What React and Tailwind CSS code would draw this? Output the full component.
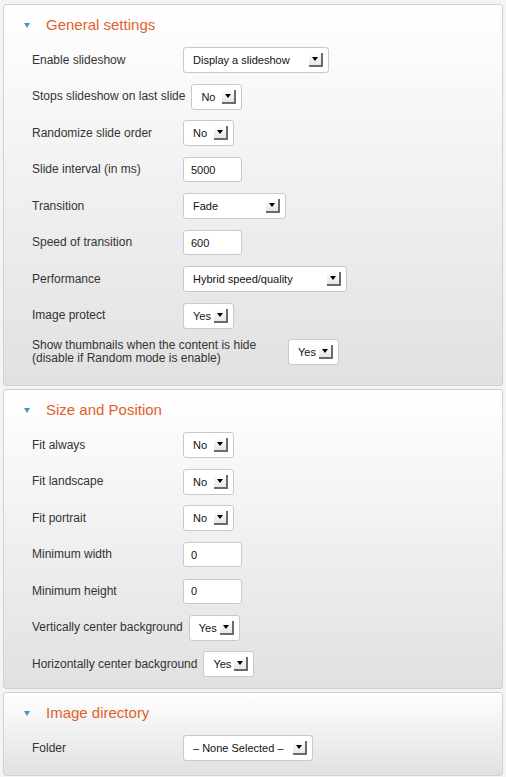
import React from 'react';

const Arrow = () => (
  <span className="flex h-[14px] w-[14px] shrink-0 items-center justify-center border-r-2 border-b-2 border-[#6b6b6b] bg-gradient-to-b from-white to-[#e6e6e6]">
    <span className="h-0 w-0 border-x-[3px] border-t-[4px] border-x-transparent border-t-black" />
  </span>
);

const Select = ({ value, width }) => (
  <div className={`flex h-[26px] shrink-0 items-center justify-between rounded-[3px] border border-[#c9c9c9] bg-white pl-[9px] pr-[5px] text-[11px] text-[#111] ${width}`}>
    <span className="whitespace-nowrap">{value}</span>
    <Arrow />
  </div>
);

const Input = ({ value }) => (
  <div className="flex h-[25px] w-[59px] shrink-0 items-center rounded-[3px] border border-[#c9c9c9] bg-white pl-[7px] text-[11px] text-[#111]">
    {value}
  </div>
);

const Row = ({ label, children, labelClass = 'min-w-[151px]' }) => (
  <div className="flex h-[36.5px] items-center pl-[28px]">
    <div className={`shrink-0 pr-[6px] text-[12px] leading-[13px] text-[#333] ${labelClass}`}>{label}</div>
    {children}
  </div>
);

const Panel = ({ title, pb, children }) => (
  <div className={`rounded-[3px] border border-[#cfcfcf] bg-gradient-to-b from-white to-[#e1e1e1] ${pb}`}>
    <div className="flex h-[37px] items-center pl-[20px] pt-[4px]">
      <span className="h-0 w-0 border-x-[3.5px] border-t-[5px] border-x-transparent border-t-[#3c9cc0]" />
      <span className="ml-[16px] text-[15px] text-[#e0622b]">{title}</span>
    </div>
    {children}
  </div>
);

export default function App() {
  return (
    <div className="min-h-screen bg-[#f4f4f4] px-[3px] pt-[4px] font-['Liberation_Sans',Arial,sans-serif]">
      <div className="flex flex-col gap-[3px]">
        <Panel title="General settings" pb="pb-[14.5px]">
          <Row label="Enable slideshow"><Select value="Display a slideshow" width="w-[146px]" /></Row>
          <Row label="Stops slideshow on last slide"><Select value="No" width="w-[51px]" /></Row>
          <Row label="Randomize slide order"><Select value="No" width="w-[51px]" /></Row>
          <Row label="Slide interval (in ms)"><Input value="5000" /></Row>
          <Row label="Transition"><Select value="Fade" width="w-[103px]" /></Row>
          <Row label="Speed of transition"><Input value="600" /></Row>
          <Row label="Performance"><Select value="Hybrid speed/quality" width="w-[164px]" /></Row>
          <Row label="Image protect"><Select value="Yes" width="w-[51px]" /></Row>
          <Row
            label={<>Show thumbnails when the content is hide<br />(disable if Random mode is enable)</>}
            labelClass="w-[256px]"
          >
            <Select value="Yes" width="w-[51px]" />
          </Row>
        </Panel>

        <Panel title="Size and Position" pb="pb-[5.5px]">
          <Row label="Fit always"><Select value="No" width="w-[51px]" /></Row>
          <Row label="Fit landscape"><Select value="No" width="w-[51px]" /></Row>
          <Row label="Fit portrait"><Select value="No" width="w-[51px]" /></Row>
          <Row label="Minimum width"><Input value="0" /></Row>
          <Row label="Minimum height"><Input value="0" /></Row>
          <Row label="Vertically center background"><Select value="Yes" width="w-[51px]" /></Row>
          <Row label="Horizontally center background"><Select value="Yes" width="w-[51px]" /></Row>
        </Panel>

        <Panel title="Image directory" pb="pb-[8.5px]">
          <Row label="Folder"><Select value="– None Selected –" width="w-[130px]" /></Row>
        </Panel>
      </div>
    </div>
  );
}
